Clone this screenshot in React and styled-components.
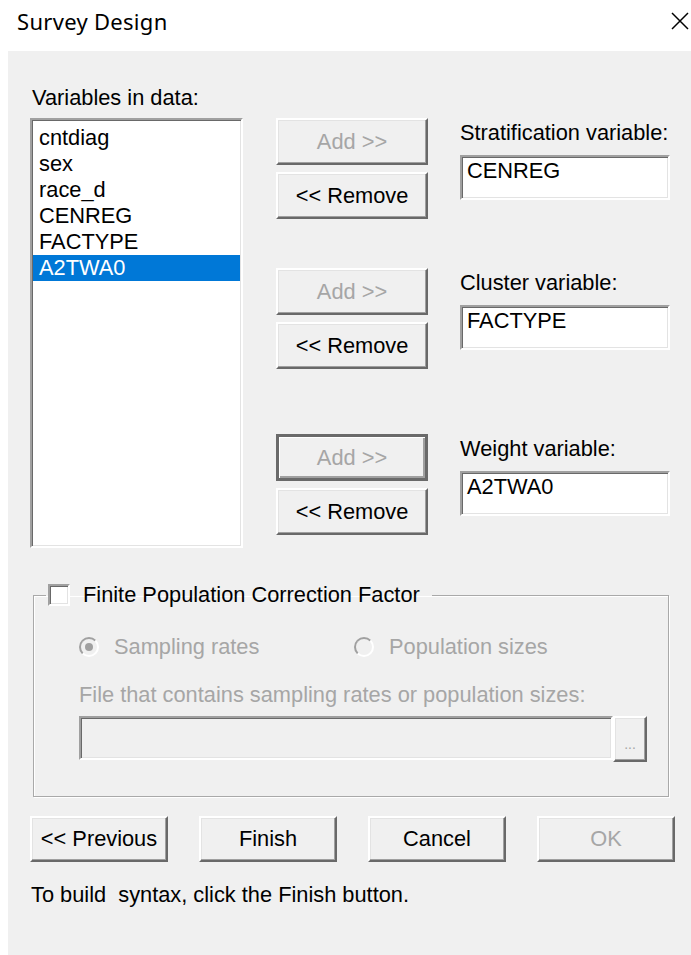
import React from 'react';
import styled, { createGlobalStyle, css } from 'styled-components';

const GlobalStyle = createGlobalStyle`
  html, body {
    margin: 0;
    padding: 0;
    background: #ffffff;
    overflow: hidden;
  }
  * {
    box-sizing: border-box;
  }
`;

const variables = ['cntdiag', 'sex', 'race_d', 'CENREG', 'FACTYPE', 'A2TWA0'];

const designFields = [
  { label: 'Stratification variable:', value: 'CENREG', offset: 0 },
  { label: 'Cluster variable:', value: 'FACTYPE', offset: 49 },
  { label: 'Weight variable:', value: 'A2TWA0', offset: 65, framed: true },
];

const CloseIcon = () => (
  <svg width="20" height="20" viewBox="0 0 20 20">
    <path d="M2 2 L18 18 M18 2 L2 18" stroke="#000" strokeWidth="1.5" fill="none" />
  </svg>
);

const SurveyDesign = () => {
  return (
    <Window>
      <GlobalStyle />
      <TitleBar>
        <Title>Survey Design</Title>
        <CloseIcon />
      </TitleBar>
      <Body>
        <TopSection>
          <ListColumn>
            <Label>Variables in data:</Label>
            <ListBox>
              {variables.map((v) => (
                <ListItem key={v} selected={v === 'A2TWA0'}>
                  {v}
                </ListItem>
              ))}
            </ListBox>
          </ListColumn>
          <FieldsColumn>
            {designFields.map((f) => (
              <FieldGroup key={f.label} offset={f.offset}>
                <ButtonStack>
                  <Button disabled framed={f.framed}>
                    Add &gt;&gt;
                  </Button>
                  <Button>&lt;&lt; Remove</Button>
                </ButtonStack>
                <Field>
                  <FieldLabel>{f.label}</FieldLabel>
                  <TextBox>{f.value}</TextBox>
                </Field>
              </FieldGroup>
            ))}
          </FieldsColumn>
        </TopSection>

        <GroupBox>
          <Legend>
            <CheckBox />
            <span>Finite Population Correction Factor</span>
          </Legend>
          <RadioRow>
            <RadioOption>
              <Radio checked />
              <span>Sampling rates</span>
            </RadioOption>
            <RadioOption>
              <Radio />
              <span>Population sizes</span>
            </RadioOption>
          </RadioRow>
          <DisabledLabel>File that contains sampling rates or population sizes:</DisabledLabel>
          <FileRow>
            <FileInput />
            <BrowseButton>...</BrowseButton>
          </FileRow>
        </GroupBox>

        <ActionBar>
          <ActionButton>&lt;&lt; Previous</ActionButton>
          <ActionButton>Finish</ActionButton>
          <ActionButton>Cancel</ActionButton>
          <ActionButton disabled>OK</ActionButton>
        </ActionBar>

        <Hint>To build&nbsp; syntax, click the Finish button.</Hint>
      </Body>
    </Window>
  );
};

const sunken = css`
  border: 2px solid;
  border-color: #a0a0a0 #ffffff #ffffff #a0a0a0;
  box-shadow: inset 1px 1px 0 #696969, inset -1px -1px 0 #e3e3e3;
`;

const raised = css`
  border: 2px solid;
  border-color: #ffffff #696969 #696969 #ffffff;
  box-shadow: inset -1px -1px 0 #a0a0a0, inset 1px 1px 0 #e3e3e3;
`;

const Window = styled.div`
  width: 691px;
  height: 955px;
  display: flex;
  flex-direction: column;
  font-family: 'Liberation Sans', Arial, sans-serif;
  font-size: 21.8px;
  color: #000;
`;

const TitleBar = styled.div`
  height: 51px;
  flex-shrink: 0;
  display: flex;
  align-items: center;
  justify-content: space-between;
  padding: 0 1px 10px 17px;
  background: #ffffff;
`;

const Title = styled.div`
  font-family: 'Noto Sans', 'Open Sans', sans-serif;
  font-size: 22px;
  letter-spacing: 0.3px;
`;

const Body = styled.div`
  flex: 1;
  margin-left: 8px;
  background: #f0f0f0;
  padding: 36px 0 0 22px;
`;

const TopSection = styled.div`
  display: flex;
  align-items: flex-start;
`;

const ListColumn = styled.div`
  width: 213px;
  display: flex;
  flex-direction: column;
  gap: 9px;
`;

const Label = styled.div`
  line-height: 22px;
  padding-left: 2px;
`;

const ListBox = styled.div`
  ${sunken};
  height: 430px;
  background: #ffffff;
  padding: 5px 1px 2px;
`;

const ListItem = styled.div`
  height: 26px;
  line-height: 26px;
  padding-left: 6px;
  background: ${(p) => (p.selected ? '#0078d7' : 'transparent')};
  color: ${(p) => (p.selected ? '#ffffff' : '#000')};
`;

const FieldsColumn = styled.div`
  margin: 31px 0 0 33px;
  display: flex;
  flex-direction: column;
`;

const FieldGroup = styled.div`
  display: flex;
  gap: 32px;
  margin-top: ${(p) => p.offset}px;
`;

const ButtonStack = styled.div`
  width: 152px;
  display: flex;
  flex-direction: column;
  gap: 7px;
`;

const Button = styled.div`
  ${raised};
  height: 47px;
  display: flex;
  align-items: center;
  justify-content: center;
  background: #f0f0f0;
  color: ${(p) => (p.disabled ? '#a6a6a6' : '#000')};
  ${(p) =>
    p.framed &&
    css`
      border: 3px solid #6a6a6a;
      box-shadow: inset 1px 1px 0 #ffffff, inset -2px -2px 0 #a0a0a0;
    `}
`;

const Field = styled.div`
  width: 210px;
  padding-top: 4px;
`;

const FieldLabel = styled.div`
  line-height: 22px;
`;

const TextBox = styled.div`
  ${sunken};
  margin-top: 11px;
  height: 45px;
  background: #ffffff;
  padding: 3px 5px;
  line-height: 22px;
`;

const GroupBox = styled.fieldset`
  margin: 36px 0 0 3px;
  width: 636px;
  border: 1px solid #a9a9a9;
  box-shadow: 1px 1px 0 #ffffff, inset 1px 1px 0 #ffffff;
  padding: 0 0 34px 45px;
`;

const Legend = styled.legend`
  display: flex;
  align-items: center;
  gap: 13px;
  margin-left: -33px;
  padding: 0 12px 0 2px;
  line-height: 22px;
`;

const CheckBox = styled.span`
  ${sunken};
  width: 22px;
  height: 22px;
  background: #ffffff;
`;

const RadioRow = styled.div`
  display: grid;
  grid-template-columns: 275px auto;
  margin-top: 30px;
  color: #a6a6a6;
`;

const RadioOption = styled.div`
  display: flex;
  align-items: center;
  gap: 15px;
  line-height: 22px;
`;

const Radio = styled.span`
  position: relative;
  width: 20px;
  height: 20px;
  border-radius: 50%;
  border: 2px solid;
  border-color: #a0a0a0 #ffffff #ffffff #a0a0a0;
  background: #f0f0f0;
  ${(p) =>
    p.checked &&
    css`
      &::after {
        content: '';
        position: absolute;
        left: 4px;
        top: 4px;
        width: 8px;
        height: 8px;
        border-radius: 50%;
        background: #a0a0a0;
      }
    `}
`;

const DisabledLabel = styled.div`
  margin-top: 26px;
  line-height: 22px;
  color: #a6a6a6;
`;

const FileRow = styled.div`
  display: flex;
  align-items: flex-start;
  margin-top: 10px;
`;

const FileInput = styled.div`
  ${sunken};
  width: 534px;
  height: 44px;
  background: #f0f0f0;
`;

const BrowseButton = styled.div`
  ${raised};
  width: 34px;
  height: 46px;
  display: flex;
  align-items: flex-end;
  justify-content: center;
  padding-bottom: 8px;
  font-size: 14px;
  color: #a6a6a6;
`;

const ActionBar = styled.div`
  display: flex;
  gap: 31px;
  margin-top: 19px;
`;

const ActionButton = styled(Button)`
  width: 138px;
  height: 46px;
`;

const Hint = styled.div`
  margin-top: 22px;
  line-height: 22px;
  padding-left: 1px;
`;

export default SurveyDesign;
